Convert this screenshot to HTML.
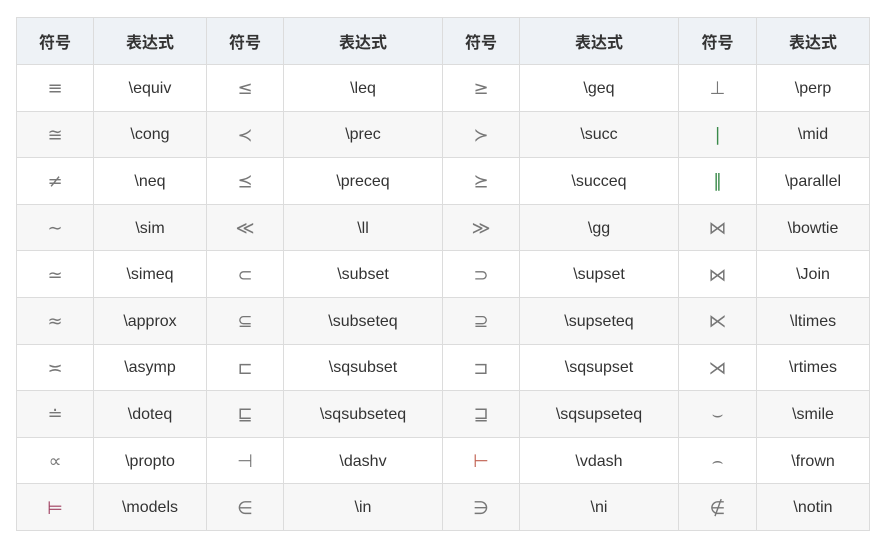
<!DOCTYPE html>
<html><head><meta charset="utf-8"><style>
body{margin:0;background:#fff;font-family:"Liberation Sans","Noto Sans CJK SC",sans-serif;}
table{position:absolute;left:16px;top:17px;border-collapse:collapse;table-layout:fixed;width:853px;}
td,th{border:1px solid #dcdcdc;text-align:center;height:46.6px;padding:2px 0 0 0;font-size:16px;color:#333;box-sizing:border-box;}
th{background:#eef2f6;font-weight:bold;font-size:16px;height:47px;padding:0;color:#333;}
tr:nth-child(odd) td{background:#f7f7f7;}
td.s{color:#777;font-family:"DejaVu Sans",sans-serif;font-size:18px;}
</style></head><body>
<table>
<colgroup><col style="width:77px"><col style="width:113px"><col style="width:77px"><col style="width:159px"><col style="width:77px"><col style="width:159px"><col style="width:78px"><col style="width:113px"></colgroup>
<tr><th>符号</th><th>表达式</th><th>符号</th><th>表达式</th><th>符号</th><th>表达式</th><th>符号</th><th>表达式</th></tr>
<tr><td class="s">≡</td><td>\equiv</td><td class="s">≤</td><td>\leq</td><td class="s">≥</td><td>\geq</td><td class="s">⊥</td><td>\perp</td></tr>
<tr><td class="s">≅</td><td>\cong</td><td class="s">≺</td><td>\prec</td><td class="s">≻</td><td>\succ</td><td class="s" style="color:#3a8a4a">∣</td><td>\mid</td></tr>
<tr><td class="s">≠</td><td>\neq</td><td class="s">⪯</td><td>\preceq</td><td class="s">⪰</td><td>\succeq</td><td class="s" style="color:#3a8a4a">∥</td><td>\parallel</td></tr>
<tr><td class="s">∼</td><td>\sim</td><td class="s">≪</td><td>\ll</td><td class="s">≫</td><td>\gg</td><td class="s">⋈</td><td>\bowtie</td></tr>
<tr><td class="s">≃</td><td>\simeq</td><td class="s">⊂</td><td>\subset</td><td class="s">⊃</td><td>\supset</td><td class="s">⋈</td><td>\Join</td></tr>
<tr><td class="s">≈</td><td>\approx</td><td class="s">⊆</td><td>\subseteq</td><td class="s">⊇</td><td>\supseteq</td><td class="s">⋉</td><td>\ltimes</td></tr>
<tr><td class="s">≍</td><td>\asymp</td><td class="s">⊏</td><td>\sqsubset</td><td class="s">⊐</td><td>\sqsupset</td><td class="s">⋊</td><td>\rtimes</td></tr>
<tr><td class="s">≐</td><td>\doteq</td><td class="s">⊑</td><td>\sqsubseteq</td><td class="s">⊒</td><td>\sqsupseteq</td><td class="s">⌣</td><td>\smile</td></tr>
<tr><td class="s">∝</td><td>\propto</td><td class="s">⊣</td><td>\dashv</td><td class="s" style="color:#c06050">⊢</td><td>\vdash</td><td class="s">⌢</td><td>\frown</td></tr>
<tr><td class="s" style="color:#a04060">⊨</td><td>\models</td><td class="s">∈</td><td>\in</td><td class="s">∋</td><td>\ni</td><td class="s">∉</td><td>\notin</td></tr>
</table>
</body></html>
